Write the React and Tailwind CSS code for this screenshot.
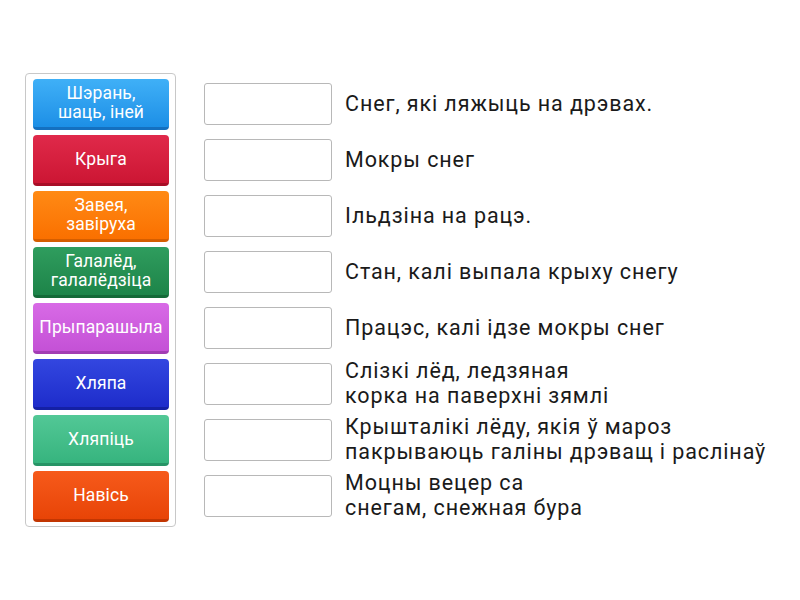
import React from "react";

const tiles = [
  { t: ["Шэрань,", "шаць, іней"], c: "bg-gradient-to-b from-[#3fb0f7] to-[#1c8fe6] border-b-[#1470c0]" },
  { t: ["Крыга"], c: "bg-gradient-to-b from-[#e0294a] to-[#cc1533] border-b-[#a80d26]" },
  { t: ["Завея,", "завіруха"], c: "bg-gradient-to-b from-[#ff8a14] to-[#fa7000] border-b-[#d55e00]" },
  { t: ["Галалёд,", "галалёдзіца"], c: "bg-gradient-to-b from-[#2f9d5e] to-[#1d8449] border-b-[#146a38]" },
  { t: ["Прыпарашыла"], c: "bg-gradient-to-b from-[#d86ae6] to-[#c451d6] border-b-[#a23db4]" },
  { t: ["Хляпа"], c: "bg-gradient-to-b from-[#3346e0] to-[#1e2ccb] border-b-[#1420a5]" },
  { t: ["Хляпіць"], c: "bg-gradient-to-b from-[#52c896] to-[#36b47e] border-b-[#279466]" },
  { t: ["Навісь"], c: "bg-gradient-to-b from-[#f65a1a] to-[#e84406] border-b-[#c23602]" },
];

const defs = [
  ["Снег, які ляжыць на дрэвах."],
  ["Мокры снег"],
  ["Ільдзіна на рацэ."],
  ["Стан, калі выпала крыху снегу"],
  ["Працэс, калі ідзе мокры снег"],
  ["Слізкі лёд, ледзяная", "корка на паверхні зямлі"],
  ["Крышталікі лёду, якія ў мароз", "пакрываюць галіны дрэващ і раслінаў"],
  ["Моцны вецер са", "снегам, снежная бура"],
];

export default function App() {
  return (
    <div className="w-[800px] h-[600px] bg-white flex" style={{ fontFamily: "Roboto, 'Noto Sans', sans-serif" }}>
      <div className="ml-[25px] mt-[73px] w-[151px] h-[454px] border border-[#c8c8c8] rounded-[4px] pl-[7px] pr-[6px] pt-[5px] flex flex-col gap-[5px]">
        {tiles.map((x, i) => (
          <div
            key={i}
            className={`h-[51px] rounded-[4px] border-b-[3px] flex flex-col items-center justify-center text-white text-[17.5px] tracking-[0.1px] leading-[19px] text-center whitespace-nowrap ${x.c}`}
          >
            {x.t.map((l, j) => (
              <div key={j}>{l}</div>
            ))}
          </div>
        ))}
      </div>
      <div className="ml-[28px] mt-[76px] flex flex-col">
        {defs.map((d, i) => (
          <div key={i} className="h-[56px] flex items-center">
            <div className="w-[128px] h-[42px] border border-[#b8b8b8] rounded-[3px] bg-white shrink-0" />
            <div className="ml-[13px] text-[21.5px] tracking-[0.9px] leading-[25px] text-[#1a1a1a] -mt-[2px] whitespace-nowrap">
              {d.map((l, j) => (
                <div key={j}>{l}</div>
              ))}
            </div>
          </div>
        ))}
      </div>
    </div>
  );
}
